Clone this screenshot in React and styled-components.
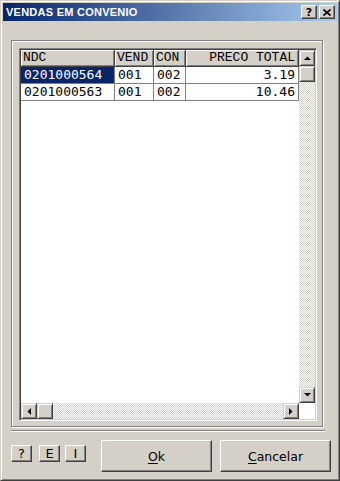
import React from 'react';
import styled, { createGlobalStyle } from 'styled-components';

const Global = createGlobalStyle`
  html, body { margin: 0; padding: 0; background: #D4D0C8; }
  #root { width: 340px; height: 481px; }
`;

const FACE = '#D4D0C8';

const Window = styled.div`
  box-sizing: border-box;
  width: 340px;
  height: 481px;
  background: ${FACE};
  border: 1px solid;
  border-color: ${FACE} #404040 #404040 ${FACE};
  box-shadow: inset 1px 1px 0 #fff, inset -1px -1px 0 #808080;
  padding: 2px;
  display: flex;
  flex-direction: column;
  font-family: "DejaVu Sans", sans-serif;
`;

const TitleBar = styled.div`
  height: 18px;
  flex: none;
  display: flex;
  align-items: center;
  padding: 0 2px 0 2px;
  background: linear-gradient(to right, #0A246A, #A6CAF0);
`;

const TitleText = styled.div`
  flex: 1;
  color: #fff;
  font-family: "Liberation Sans", Arial, sans-serif;
  font-weight: bold;
  font-size: 11px;
  letter-spacing: 0.25px;
  line-height: 18px;
  padding-left: 1px;
`;

const CaptionButton = styled.div`
  box-sizing: border-box;
  width: 16px;
  height: 14px;
  margin-left: ${p => p.$gap || 0}px;
  background: ${FACE};
  border: 1px solid;
  border-color: #fff #404040 #404040 #fff;
  box-shadow: inset -1px -1px 0 #808080;
  display: flex;
  align-items: center;
  justify-content: center;
  font-family: "DejaVu Sans", sans-serif;
  font-weight: bold;
  font-size: 11px;
  color: #000;
`;

const Body = styled.div`
  flex: 1;
  display: flex;
  flex-direction: column;
  padding: 19px 0 0 8px;
`;

const GroupBox = styled.div`
  box-sizing: border-box;
  width: 312px;
  height: 387px;
  border: 1px solid #808080;
  box-shadow: inset 1px 1px 0 #fff, 1px 1px 0 #fff;
  padding: 7px 5px 5px 7px;
  display: flex;
`;

const Grid = styled.div`
  flex: 1;
  display: grid;
  grid-template-columns: 1fr 16px;
  grid-template-rows: 1fr 16px;
  border: 1px solid;
  border-color: #808080 #fff #fff #808080;
  box-shadow: inset 1px 1px 0 #404040, inset -1px -1px 0 ${FACE};
  padding: 1px;
  background: #fff;
`;

const Cells = styled.div`
  overflow: hidden;
  background: #fff;
  display: flex;
  flex-direction: column;
`;

const Row = styled.div`
  display: flex;
  height: 16px;
  border-bottom: 1px solid ${p => (p.$head ? '#404040' : '#808080')};
`;

const HeadCell = styled.div`
  box-sizing: border-box;
  width: ${p => p.$w + 1}px;
  height: 16px;
  flex: none;
  background: ${FACE};
  box-shadow: inset 1px 1px 0 #fff, inset -1px -1px 0 #808080;
  border-right: 1px solid #404040;
  font-family: "Liberation Mono", "Courier New", monospace;
  font-size: 13px;
  line-height: 16px;
  color: #000;
  text-align: ${p => p.$align || 'left'};
  padding: 0 3px 0 2px;
  white-space: pre;
  overflow: hidden;
`;

const DataCell = styled.div`
  box-sizing: border-box;
  width: ${p => p.$w + 1}px;
  height: 16px;
  flex: none;
  border-right: 1px solid #808080;
  background: ${p => (p.$sel ? '#0A246A' : '#fff')};
  color: ${p => (p.$sel ? '#fff' : '#000')};
  font-family: "DejaVu Sans Mono", monospace;
  font-size: 13px;
  line-height: 16px;
  text-align: ${p => p.$align || 'left'};
  padding: 0 3px 0 3px;
  white-space: pre;
  overflow: hidden;
`;

const checker = `
  background-color: #fff;
  background-image: repeating-conic-gradient(${FACE} 0% 25%, #fff 0% 50%);
  background-size: 2px 2px;
`;

const VScroll = styled.div`
  display: flex;
  flex-direction: column;
  ${checker}
`;

const HScroll = styled.div`
  display: flex;
  ${checker}
`;

const Track = styled.div`
  flex: 1;
`;

const Corner = styled.div`
  background: #fff;
`;

const ScrollBtn = styled.div`
  box-sizing: border-box;
  width: 16px;
  height: 16px;
  flex: none;
  background: ${FACE};
  border: 1px solid;
  border-color: ${FACE} #404040 #404040 ${FACE};
  box-shadow: inset 1px 1px 0 #fff, inset -1px -1px 0 #808080;
  display: flex;
  align-items: center;
  justify-content: center;
`;

const Separator = styled.div`
  width: 314px;
  height: 0;
  margin-top: 3px;
  border-top: 1px solid #808080;
  border-bottom: 1px solid #fff;
`;

const ButtonRow = styled.div`
  display: flex;
  align-items: flex-start;
  margin-top: 8px;
`;

const SmallButton = styled.div`
  box-sizing: border-box;
  width: 21px;
  height: 17px;
  margin-top: 5px;
  margin-right: ${p => p.$mr}px;
  background: ${FACE};
  border: 1px solid;
  border-color: #fff #404040 #404040 #fff;
  box-shadow: inset -1px -1px 0 #808080;
  display: flex;
  align-items: center;
  justify-content: center;
  font-family: "DejaVu Sans", sans-serif;
  font-size: 13px;
  color: #000;
`;

const Button = styled.div`
  box-sizing: border-box;
  width: 111px;
  height: 32px;
  margin-right: ${p => p.$mr || 0}px;
  background: ${FACE};
  border: 1px solid;
  border-color: #fff #404040 #404040 #fff;
  box-shadow: inset -1px -1px 0 #808080;
  display: flex;
  align-items: center;
  justify-content: center;
  font-family: "DejaVu Sans", sans-serif;
  font-size: 12.5px;
  color: #000;
  u { text-decoration: underline; text-underline-offset: 2px; }
`;

const Arrow = ({ dir }) => {
  const pts = {
    up: '0,4 7,4 3.5,0.5',
    down: '0,0 7,0 3.5,3.5',
    left: '4,0 4,7 0.5,3.5',
    right: '0,0 0,7 3.5,3.5',
  }[dir];
  const vert = dir === 'up' || dir === 'down';
  return (
    <svg width={vert ? 7 : 4} height={vert ? 4 : 7} viewBox={vert ? '0 0 7 4' : '0 0 4 7'}>
      <polygon points={pts} fill="#000" />
    </svg>
  );
};

const cols = [
  { key: 'ndc', label: 'NDC', w: 93 },
  { key: 'vend', label: 'VEND', w: 38 },
  { key: 'con', label: 'CON', w: 31 },
  { key: 'preco', label: 'PRECO TOTAL', w: 112, align: 'right' },
];

const rows = [
  { ndc: '0201000564', vend: '001', con: '002', preco: '3.19' },
  { ndc: '0201000563', vend: '001', con: '002', preco: '10.46' },
];

export default function App() {
  return (
    <>
      <Global />
      <Window>
        <TitleBar>
          <TitleText>VENDAS EM CONVENIO</TitleText>
          <CaptionButton>?</CaptionButton>
          <CaptionButton $gap={2}>
            <svg width="8" height="7" viewBox="0 0 8 7">
              <path d="M0.5 0.5 L7.5 6.5 M7.5 0.5 L0.5 6.5" stroke="#000" strokeWidth="1.6" />
            </svg>
          </CaptionButton>
        </TitleBar>
        <Body>
          <GroupBox>
            <Grid>
              <Cells>
                <Row $head>
                  {cols.map(c => (
                    <HeadCell key={c.key} $w={c.w} $align={c.align}>{c.label}</HeadCell>
                  ))}
                </Row>
                {rows.map((r, i) => (
                  <Row key={i}>
                    {cols.map((c, j) => (
                      <DataCell key={c.key} $w={c.w} $align={c.align} $sel={i === 0 && j === 0}>
                        {r[c.key]}
                      </DataCell>
                    ))}
                  </Row>
                ))}
              </Cells>
              <VScroll>
                <ScrollBtn><Arrow dir="up" /></ScrollBtn>
                <ScrollBtn />
                <Track />
                <ScrollBtn><Arrow dir="down" /></ScrollBtn>
              </VScroll>
              <HScroll>
                <ScrollBtn><Arrow dir="left" /></ScrollBtn>
                <ScrollBtn />
                <Track />
                <ScrollBtn><Arrow dir="right" /></ScrollBtn>
              </HScroll>
              <Corner />
            </Grid>
          </GroupBox>
          <Separator />
          <ButtonRow>
            <SmallButton $mr={7}>?</SmallButton>
            <SmallButton $mr={5}>E</SmallButton>
            <SmallButton $mr={15}>I</SmallButton>
            <Button $mr={8}><u>O</u>k</Button>
            <Button><u>C</u>ancelar</Button>
          </ButtonRow>
        </Body>
      </Window>
    </>
  );
}
